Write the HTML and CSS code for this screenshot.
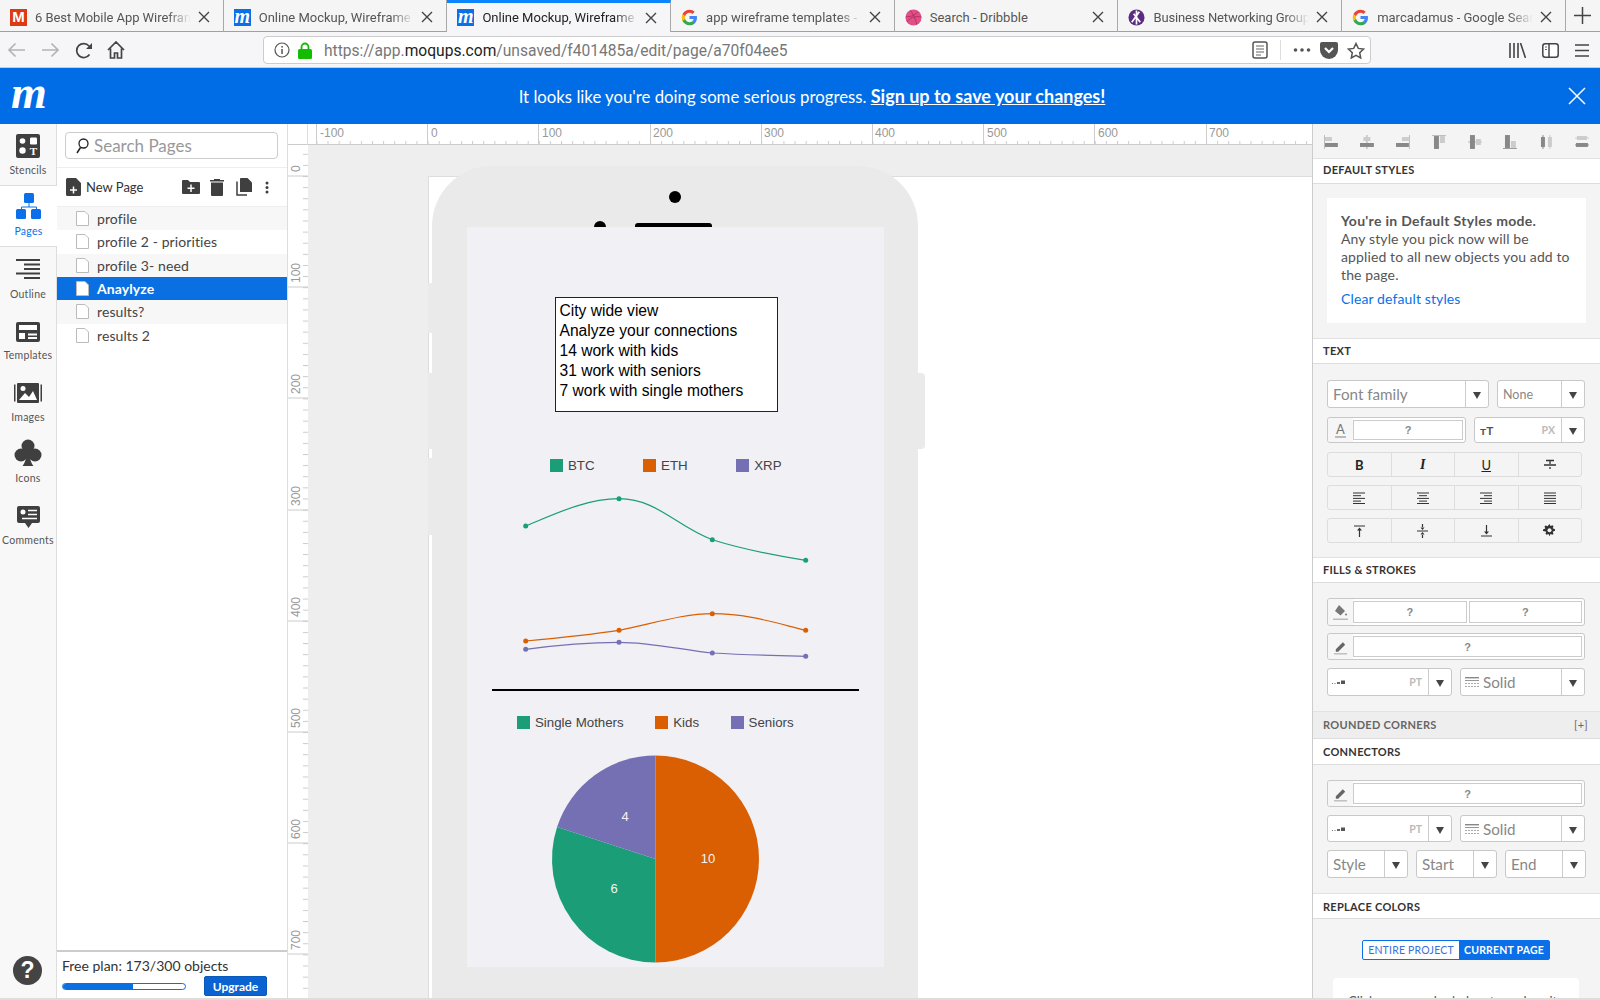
FILE: index.html
```html
<!DOCTYPE html>
<html lang="en">
<head>
<meta charset="UTF-8">
<title>Online Mockup, Wireframe</title>
<link rel="stylesheet" href="styles.css">
</head>
<body>

<svg class="sprite">
    <symbol id="g-logo" viewBox="0 0 24 24">
        <path fill="#4285F4" d="M22.56 12.25c0-.78-.07-1.53-.2-2.25H12v4.26h5.92c-.26 1.37-1.04 2.53-2.21 3.31v2.77h3.57c2.08-1.92 3.28-4.74 3.28-8.09z"/>
        <path fill="#34A853" d="M12 23c2.97 0 5.46-.98 7.28-2.66l-3.57-2.77c-.98.66-2.23 1.06-3.71 1.06-2.86 0-5.29-1.93-6.16-4.53H2.18v2.84C3.99 20.53 7.7 23 12 23z"/>
        <path fill="#FBBC05" d="M5.84 14.09c-.22-.66-.35-1.36-.35-2.09s.13-1.43.35-2.09V7.07H2.18C1.43 8.55 1 10.22 1 12s.43 3.45 1.18 4.93l2.85-2.22.81-.62z"/>
        <path fill="#EA4335" d="M12 5.38c1.62 0 3.06.56 4.21 1.64l3.15-3.15C17.45 2.09 14.97 1 12 1 7.7 1 3.99 3.47 2.18 7.07l3.66 2.84c.87-2.6 3.3-4.53 6.16-4.53z"/>
    </symbol>
    <symbol id="close-x" viewBox="0 0 12 12">
        <path d="M1 1l10 10M11 1L1 11" stroke="#444" stroke-width="1.4" fill="none"/>
    </symbol>
    <symbol id="page" viewBox="0 0 13 15">
        <path d="M.5.5h8.5l3.5 3.5v10.5H.5z" fill="#fff" stroke="#bbb"/>
    </symbol>
    <symbol id="pencil" viewBox="0 0 16 16">
        <path d="M3 10.5L10.5 3l2.5 2.5L5.5 13H3z" fill="#666"/>
        <rect x="1" y="14.5" width="14" height="1.5" fill="#bbb"/>
    </symbol>
    <symbol id="line-width" viewBox="0 0 14 6">
        <rect x="0" y="4" width="1" height="1" fill="#777"/>
        <rect x="2.5" y="4" width="1" height="1" fill="#777"/>
        <rect x="5" y="3" width="3" height="2" fill="#666"/>
        <rect x="9" y="1.5" width="4" height="3.5" fill="#555"/>
    </symbol>
    <symbol id="line-style" viewBox="0 0 14 12">
        <rect x="0" y="1" width="14" height="1.4" fill="#888"/>
        <rect x="0" y="4" width="14" height="1" fill="#999"/>
        <path d="M0 7.5h14M0 10.5h14" stroke="#aaa" stroke-dasharray="2 1"/>
    </symbol>
</svg>

<div class="tabs">
    <div class="tab">
        <span class="favicon fav-red">M</span>
        <span class="tab-title tab-title-snug">6 Best Mobile App Wirefran</span>
        <svg class="tab-close"><use href="#close-x"/></svg>
    </div>
    <div class="tab">
        <span class="favicon fav-blue">m</span>
        <span class="tab-title">Online Mockup, Wireframe</span>
        <svg class="tab-close"><use href="#close-x"/></svg>
    </div>
    <div class="tab tab-active">
        <span class="favicon fav-blue">m</span>
        <span class="tab-title">Online Mockup, Wireframe</span>
        <svg class="tab-close"><use href="#close-x"/></svg>
    </div>
    <div class="tab">
        <svg class="fav-svg"><use href="#g-logo"/></svg>
        <span class="tab-title">app wireframe templates -</span>
        <svg class="tab-close"><use href="#close-x"/></svg>
    </div>
    <div class="tab">
        <svg class="fav-svg" viewBox="0 0 18 18">
            <circle cx="9" cy="9" r="8.5" fill="#e04f86"/>
            <path d="M5.5 1.5c3 3.5 6 9.5 7 15M1 8c4 .5 9-.5 12.5-5M2.5 13.5c2.5-4 7-6.5 15-5" stroke="#a82a5c" stroke-width=".8" fill="none"/>
        </svg>
        <span class="tab-title tab-title-short">Search - Dribbble</span>
        <svg class="tab-close"><use href="#close-x"/></svg>
    </div>
    <div class="tab">
        <svg class="fav-svg" viewBox="0 0 18 18">
            <circle cx="9" cy="9" r="8.5" fill="#5b2d82"/>
            <path d="M9 1.5v15M4 14L12 3M6 5l7 9" stroke="#fff" stroke-width="1.8" fill="none"/>
        </svg>
        <span class="tab-title tab-title-tight">Business Networking Group</span>
        <svg class="tab-close"><use href="#close-x"/></svg>
    </div>
    <div class="tab">
        <svg class="fav-svg"><use href="#g-logo"/></svg>
        <span class="tab-title">marcadamus - Google Sear</span>
        <svg class="tab-close"><use href="#close-x"/></svg>
    </div>
    <div class="new-tab">
        <svg width="17" height="17" viewBox="0 0 17 17"><path d="M8.5 0v17M0 8.5h17" stroke="#444" stroke-width="1.5"/></svg>
    </div>
</div>

<div class="toolbar">
    <svg class="tool tool-back" width="19" height="16" viewBox="0 0 19 16"><path d="M18 8H2M8.5 1.5L2 8l6.5 6.5" stroke="#b4b4b4" stroke-width="1.7" fill="none"/></svg>
    <svg class="tool tool-forward" width="19" height="16" viewBox="0 0 19 16"><path d="M1 8h16M10.5 1.5L17 8l-6.5 6.5" stroke="#b4b4b4" stroke-width="1.7" fill="none"/></svg>
    <svg class="tool tool-reload" width="18" height="17" viewBox="0 0 18 17"><path d="M14.5 12.5A7 7 0 1 1 14 4l2 2" stroke="#444" stroke-width="1.7" fill="none"/><path d="M17 1v6h-6z" fill="#444"/></svg>
    <svg class="tool tool-home" width="18" height="18" viewBox="0 0 18 18"><path d="M1 9l8-8 8 8M3.5 7.5V17h4v-5h3v5h4V7.5" stroke="#444" stroke-width="1.7" fill="none"/></svg>

    <div class="urlbar">
        <svg class="url-info" width="16" height="16" viewBox="0 0 16 16"><circle cx="8" cy="8" r="7" fill="none" stroke="#555" stroke-width="1.2"/><rect x="7.3" y="7" width="1.5" height="5" fill="#555"/><rect x="7.3" y="4" width="1.5" height="1.6" fill="#555"/></svg>
        <svg class="url-lock" width="14" height="17" viewBox="0 0 14 17"><path d="M3.5 8V5a3.5 3.5 0 0 1 7 0v3" stroke="#12bc00" stroke-width="1.8" fill="none"/><rect y="7" width="14" height="10" rx="1.5" fill="#12bc00"/></svg>
        <span class="url-text">https://app.<b>moqups.com</b>/unsaved/f401485a/edit/page/a70f04ee5</span>
        <svg width="16" height="18" viewBox="0 0 16 18"><rect x="1" y="1" width="14" height="16" rx="2" fill="#fff" stroke="#555" stroke-width="1.5"/><path d="M4 5h8M4 8h8M4 11h8M4 14h5" stroke="#666"/></svg>
        <span class="url-sep"></span>
        <svg width="18" height="4" viewBox="0 0 18 4"><circle cx="2.5" cy="2" r="1.8" fill="#555"/><circle cx="9" cy="2" r="1.8" fill="#555"/><circle cx="15.5" cy="2" r="1.8" fill="#555"/></svg>
        <svg width="18" height="17" viewBox="0 0 18 17"><path d="M2 0h14a2 2 0 0 1 2 2v6a9 9 0 0 1-18 0V2a2 2 0 0 1 2-2z" fill="#555"/><path d="M5 6l4 4 4-4" stroke="#fff" stroke-width="2.2" fill="none"/></svg>
        <svg width="18" height="17" viewBox="0 0 18 17"><path d="M9 1.5l2.3 4.9 5.2.7-3.8 3.6 1 5.3L9 13.4 4.3 16l1-5.300L1.500 7.100l5.200-.7z" fill="none" stroke="#555" stroke-width="1.5"/></svg>
    </div>

    <div class="browser-right">
        <svg width="17" height="15" viewBox="0 0 17 15"><path d="M1 0v15M5 0v15M9 0v15M11.5 0l5 15" stroke="#444" stroke-width="1.6"/></svg>
        <svg width="17" height="15" viewBox="0 0 17 15"><rect x=".8" y=".8" width="15.4" height="13.4" rx="2.5" fill="#fff" stroke="#444" stroke-width="1.5"/><path d="M7 1v13" stroke="#444" stroke-width="1.5"/><path d="M3 4h2M3 6.5h2" stroke="#666"/></svg>
        <svg width="14" height="13" viewBox="0 0 14 13"><path d="M0 1h14M0 6.5h14M0 12h14" stroke="#444" stroke-width="1.6"/></svg>
    </div>
</div>

<div class="banner">
    <span class="logo">m</span>
    <p class="banner-text">It looks like you're doing some serious progress. <a href="#">Sign up to save your changes!</a></p>
    <svg class="banner-close" width="18" height="18" viewBox="0 0 18 18"><path d="M1 1l16 16M17 1L1 17" stroke="#fff" stroke-width="1.5"/></svg>
</div>

<div class="app">

    <div class="rail">
        <div class="rail-item">
            <svg width="24" height="24" viewBox="0 0 24 24">
                <rect width="24" height="24" rx="2" fill="#3f3f3f"/>
                <circle cx="6.5" cy="7" r="2.8" fill="#fff"/>
                <rect x="14" y="3.5" width="7" height="7" rx="1.2" fill="#fff"/>
                <circle cx="6.5" cy="16.5" r="3.2" fill="#fff"/>
                <text x="17.5" y="21" class="stencil-t">T</text>
            </svg>
            <span>Stencils</span>
        </div>
        <div class="rail-item rail-active">
            <svg width="26" height="26" viewBox="0 0 26 26">
                <rect x="8" y="0" width="10" height="10" rx="1.5" fill="#0a6fe8"/>
                <path d="M13 10v4M5.5 16v-2h15v2" stroke="#0a6fe8" fill="none"/>
                <rect x="0" y="16" width="10" height="10" rx="1.5" fill="#0a6fe8"/>
                <rect x="15" y="16" width="10" height="10" rx="1.5" fill="#0a6fe8"/>
            </svg>
            <span>Pages</span>
        </div>
        <div class="rail-item rail-up-3">
            <svg width="24" height="20" viewBox="0 0 24 20">
                <path d="M0 1h24M8 5.5h16M8 10h16M0 14.5h24M8 19h16" stroke="#3f3f3f" stroke-width="1.8"/>
            </svg>
            <span>Outline</span>
        </div>
        <div class="rail-item rail-up-1">
            <svg width="24" height="20" viewBox="0 0 24 20">
                <rect width="24" height="20" rx="2" fill="#3f3f3f"/>
                <rect x="3" y="3" width="18" height="5" fill="#fff"/>
                <rect x="3" y="11" width="6" height="6" fill="#fff"/>
                <path d="M12 12.5h9M12 16h9" stroke="#fff" stroke-width="1.8"/>
            </svg>
            <span>Templates</span>
        </div>
        <div class="rail-item rail-up-2">
            <svg width="28" height="20" viewBox="0 0 28 20">
                <rect x="0" y="1.5" width="1.5" height="17" fill="#3f3f3f"/>
                <rect x="26.5" y="1.5" width="1.5" height="17" fill="#3f3f3f"/>
                <rect x="3" y="0" width="22" height="20" rx="1" fill="#3f3f3f"/>
                <path d="M5 17l6-7 4 4 4-6 4 9z" fill="#fff"/>
                <circle cx="9" cy="5.5" r="2.5" fill="#fff"/>
            </svg>
            <span>Images</span>
        </div>
        <div class="rail-item rail-down-1">
            <svg width="28" height="28" viewBox="0 0 28 28">
                <circle cx="14" cy="7" r="6.5" fill="#3f3f3f"/>
                <circle cx="7" cy="16" r="6.5" fill="#3f3f3f"/>
                <circle cx="21" cy="16" r="6.5" fill="#3f3f3f"/>
                <path d="M12.5 12h3c0 7 1 11 4 15H8.5c3-4 4-8 4-15z" fill="#3f3f3f"/>
            </svg>
            <span>Icons</span>
        </div>
        <div class="rail-item">
            <svg width="23" height="22" viewBox="0 0 23 22">
                <path d="M2 0h19a2 2 0 0 1 2 2v13a2 2 0 0 1-2 2h-6l-3.5 5L8 17H2a2 2 0 0 1-2-2V2a2 2 0 0 1 2-2z" fill="#3f3f3f"/>
                <circle cx="6" cy="6" r="2.5" fill="#fff"/>
                <path d="M11 4.5h9M11 8.5h9M5 12.5h15" stroke="#fff" stroke-width="1.5"/>
            </svg>
            <span>Comments</span>
        </div>
        <div class="help">?</div>
    </div>

    <div class="pages">
        <div class="search-area">
            <div class="search-box">
                <svg width="13" height="16" viewBox="0 0 13 16"><circle cx="7.5" cy="5.5" r="4.5" fill="none" stroke="#222" stroke-width="1.3"/><path d="M4.5 9.5L1 15" stroke="#222" stroke-width="1.5"/></svg>
                <span>Search Pages</span>
            </div>
        </div>
        <div class="pages-tools">
            <svg class="new-page-icon" width="15" height="18" viewBox="0 0 15 18"><path d="M1.5 0H10l5 5v11.5a1.5 1.5 0 0 1-1.5 1.5h-12A1.5 1.5 0 0 1 0 16.500v-15A1.500 1.500 0 0 1 1.500 0z" fill="#3f3f3f"/><path d="M7.5 8.5v7M4 12h7" stroke="#fff" stroke-width="1.5"/></svg>
            <span class="new-page-text">New Page</span>
            <svg class="tool-folder" width="18" height="14" viewBox="0 0 18 14"><path d="M0 1a1 1 0 0 1 1-1h5l2 2h9a1 1 0 0 1 1 1v10a1 1 0 0 1-1 1H1a1 1 0 0 1-1-1z" fill="#3f3f3f"/><path d="M9 4.5v7.5M5.5 8.2h7" stroke="#fff" stroke-width="1.5"/></svg>
            <svg class="tool-trash" width="14" height="18" viewBox="0 0 14 18"><path d="M0 2h14v1.5H0z" fill="#3f3f3f"/><path d="M4 1h6v1H4z" fill="#3f3f3f"/><path d="M1 4.5h12V17a1 1 0 0 1-1 1H2a1 1 0 0 1-1-1z" fill="#3f3f3f"/></svg>
            <svg class="tool-copy" width="16" height="18" viewBox="0 0 16 18"><path d="M5 0h6.5L16 4.5V14H4V1a1 1 0 0 1 1-1z" fill="#3f3f3f"/><path d="M1 3.5V17h10" stroke="#3f3f3f" stroke-width="1.5" fill="none"/></svg>
            <svg class="tool-dots" width="4" height="13" viewBox="0 0 4 13"><circle cx="2" cy="2" r="1.5" fill="#3f3f3f"/><circle cx="2" cy="6.5" r="1.5" fill="#3f3f3f"/><circle cx="2" cy="11" r="1.5" fill="#3f3f3f"/></svg>
        </div>
        <div class="page-row"><svg class="page-icon"><use href="#page"/></svg>profile</div>
        <div class="page-row"><svg class="page-icon"><use href="#page"/></svg>profile 2 - priorities</div>
        <div class="page-row"><svg class="page-icon"><use href="#page"/></svg>profile 3- need</div>
        <div class="page-row page-selected"><svg class="page-icon"><use href="#page"/></svg>Anaylyze</div>
        <div class="page-row"><svg class="page-icon"><use href="#page"/></svg>results?</div>
        <div class="page-row"><svg class="page-icon"><use href="#page"/></svg>results 2</div>

        <div class="plan">
            <div class="plan-text">Free plan: 173/300 objects</div>
            <div class="plan-row">
                <div class="plan-bar"><div class="plan-fill"></div></div>
                <button class="upgrade">Upgrade</button>
            </div>
        </div>
    </div>

    <div class="workspace">
        <div class="ruler-corner"></div>
        <svg class="ruler-h" width="1004" height="21" viewBox="0 0 1004 21">
            <defs>
                <pattern id="ticks-h" patternUnits="userSpaceOnUse" x="8.4" y="0" width="11.12" height="21">
                    <rect x="0" y="17" width="1" height="4" fill="#ccc"/>
                </pattern>
            </defs>
            <rect width="1004" height="21" fill="url(#ticks-h)"/>
            <path d="M8.5 0v21M119.5 0v21M230.5 0v21M342.5 0v21M453.5 0v21M564.5 0v21M675.5 0v21M786.5 0v21M898.5 0v21M0 20.5h1004" stroke="#ccc"/>
            <g class="ruler-label">
                <text x="12" y="13">-100</text><text x="123" y="13">0</text><text x="234" y="13">100</text>
                <text x="345" y="13">200</text><text x="456" y="13">300</text><text x="567" y="13">400</text>
                <text x="679" y="13">500</text><text x="790" y="13">600</text><text x="901" y="13">700</text>
            </g>
        </svg>
        <svg class="ruler-v" width="20" height="853" viewBox="0 0 20 853">
            <defs>
                <pattern id="ticks-v" patternUnits="userSpaceOnUse" x="0" y="8.76" width="20" height="11.12">
                    <rect x="15" y="0" width="5" height="1" fill="#ccc"/>
                </pattern>
            </defs>
            <rect width="20" height="853" fill="url(#ticks-v)"/>
            <path d="M0 31h20M0 142h20M0 253h20M0 365h20M0 476h20M0 587h20M0 698h20M0 809h20" stroke="#ccc"/>
            <g class="ruler-label">
                <text transform="translate(12 27) rotate(-90)">0</text>
                <text transform="translate(12 138) rotate(-90)">100</text>
                <text transform="translate(12 249) rotate(-90)">200</text>
                <text transform="translate(12 361) rotate(-90)">300</text>
                <text transform="translate(12 472) rotate(-90)">400</text>
                <text transform="translate(12 583) rotate(-90)">500</text>
                <text transform="translate(12 694) rotate(-90)">600</text>
                <text transform="translate(12 805) rotate(-90)">700</text>
            </g>
        </svg>

        <div class="canvas">
            <div class="artboard"></div>
            <div class="phone">
                <span class="phone-btn btn-left-1"></span>
                <span class="phone-btn btn-left-2"></span>
                <span class="phone-btn btn-left-3"></span>
                <span class="phone-btn btn-right"></span>
                <span class="phone-camera"></span>
                <span class="phone-sensor"></span>
                <span class="phone-speaker"></span>
                <div class="screen">
                    <div class="note">City wide view<br>Analyze your connections<br>14 work with kids<br>31 work with seniors<br>7 work with single mothers</div>

                    <div class="legend legend-top">
                        <span class="legend-item"><i class="swatch sw-green"></i>BTC</span>
                        <span class="legend-item"><i class="swatch sw-orange"></i>ETH</span>
                        <span class="legend-item"><i class="swatch sw-purple"></i>XRP</span>
                    </div>

                    <svg class="chart" width="417" height="740" viewBox="0 0 417 740">
                        <g fill="none" stroke-width="1.2">
                            <path stroke="#1b9e77" d="M58.7 299C90 286 120 271.7 152 271.7C190 271.7 210 300 245.3 312.7C275 322 305 328 338.7 333.3"/>
                            <path stroke="#d95f02" d="M58.7 414C90 411 120 408 152 403.3C185 397 215 386.7 245.3 386.7C280 386.7 305 395 338.7 403.3"/>
                            <path stroke="#7570b3" d="M58.7 422.3C90 418 120 415.3 152 415.3C185 415.3 215 423 245.3 426C280 428 305 428.5 338.7 429.3"/>
                        </g>
                        <g fill="#1b9e77"><circle cx="58.7" cy="299" r="2.5"/><circle cx="152" cy="271.7" r="2.5"/><circle cx="245.3" cy="312.7" r="2.5"/><circle cx="338.7" cy="333.3" r="2.5"/></g>
                        <g fill="#d95f02"><circle cx="58.7" cy="414" r="2.5"/><circle cx="152" cy="403.3" r="2.5"/><circle cx="245.3" cy="386.7" r="2.5"/><circle cx="338.7" cy="403.3" r="2.5"/></g>
                        <g fill="#7570b3"><circle cx="58.7" cy="422.3" r="2.5"/><circle cx="152" cy="415.3" r="2.5"/><circle cx="245.3" cy="426" r="2.5"/><circle cx="338.7" cy="429.3" r="2.5"/></g>
                        <rect x="25" y="462" width="367" height="2" fill="#000"/>

                        <path fill="#d95f02" d="M188.5 632V528.5A103.5 103.5 0 0 1 188.5 735.5z"/>
                        <path fill="#1b9e77" d="M188.5 632V735.5A103.5 103.5 0 0 1 90.06 600z"/>
                        <path fill="#7570b3" d="M188.5 632L90.06 600A103.5 103.5 0 0 1 188.5 528.5z"/>
                        <g class="pie-label">
                            <text x="241" y="636">10</text>
                            <text x="147" y="666">6</text>
                            <text x="158" y="594">4</text>
                        </g>
                    </svg>

                    <div class="legend legend-bottom">
                        <span class="legend-item"><i class="swatch sw-green"></i>Single Mothers</span>
                        <span class="legend-item"><i class="swatch sw-orange"></i>Kids</span>
                        <span class="legend-item"><i class="swatch sw-purple"></i>Seniors</span>
                    </div>
                </div>
            </div>
        </div>
    </div>

    <div class="props">
        <div class="align-row">
            <svg viewBox="0 0 16 16"><rect x="1" y="1" width="1" height="14" fill="#bbb"/><rect x="2" y="9" width="13" height="4" fill="#888"/><rect x="2" y="3" width="7" height="4" fill="#ccc"/></svg>
            <svg viewBox="0 0 16 16"><rect x="7.5" y="1" width="1" height="14" fill="#aaa"/><rect x="1" y="9" width="14" height="4" fill="#888"/><rect x="4.5" y="3" width="7" height="4" fill="#ccc"/></svg>
            <svg viewBox="0 0 16 16"><rect x="14" y="1" width="1" height="14" fill="#bbb"/><rect x="1" y="9" width="13" height="4" fill="#888"/><rect x="7" y="3" width="7" height="4" fill="#ccc"/></svg>
            <svg viewBox="0 0 16 16"><rect x="1" y="1" width="14" height="1" fill="#bbb"/><rect x="3" y="2" width="5" height="13" fill="#888"/><rect x="9" y="2" width="5" height="7" fill="#ccc"/></svg>
            <svg viewBox="0 0 16 16"><rect x="1" y="7.5" width="14" height="1" fill="#bbb"/><rect x="3" y="1" width="5" height="14" fill="#888"/><rect x="9" y="5" width="5" height="6" fill="#ccc"/></svg>
            <svg viewBox="0 0 16 16"><rect x="1" y="14" width="14" height="1" fill="#999"/><rect x="3" y="1" width="5" height="13" fill="#888"/><rect x="9" y="7" width="5" height="7" fill="#ccc"/></svg>
            <svg viewBox="0 0 16 16"><rect x="3" y="3" width="4" height="10" fill="#888"/><rect x="4.5" y="1" width="1" height="14" fill="#888"/><rect x="10" y="3" width="4" height="10" fill="#ccc"/><rect x="11.5" y="1" width="1" height="14" fill="#ccc"/></svg>
            <svg viewBox="0 0 16 16"><rect x="3" y="2" width="10" height="4" fill="#ccc"/><rect x="1" y="3.5" width="14" height="1" fill="#ccc"/><rect x="2" y="9" width="12" height="4" fill="#888"/><rect x="1" y="10.5" width="14" height="1" fill="#888"/></svg>
        </div>

        <div class="sec-head sec-first">Default styles</div>
        <div class="sec-body body-default">
            <div class="info-card">
                <b>You're in Default Styles mode.</b><br>
                Any style you pick now will be<br>
                applied to all new objects you add to<br>
                the page.
                <a href="#">Clear default styles</a>
            </div>
        </div>

        <div class="sec-head">Text</div>
        <div class="sec-body body-text">
            <div class="row">
                <div class="ctl w-162 h-28"><span class="ctl-text">Font family</span><span class="arrow"></span></div>
                <div class="ctl w-88 h-28"><span class="ctl-text small">None</span><span class="arrow"></span></div>
            </div>
            <div class="row mt-9">
                <div class="ctl w-139 h-26">
                    <span class="swatch-slot"><span class="letter-a">A</span></span>
                    <span class="color-box">?</span>
                </div>
                <div class="ctl w-111 h-26">
                    <span class="size-icon">тT</span><span class="unit">PX</span><span class="arrow"></span>
                </div>
            </div>
            <div class="btn-group mt-9">
                <span><b class="fmt-b">B</b></span>
                <span><i class="fmt-i">I</i></span>
                <span><u class="fmt-u">U</u></span>
                <span><svg width="12" height="12" viewBox="0 0 12 12"><path d="M0 6h12M2 1.5h8M6 1.5V5M6 8v2" stroke="#333" stroke-width="1.3"/></svg></span>
            </div>
            <div class="btn-group mt-8">
                <span><svg width="12" height="12" viewBox="0 0 12 12"><path d="M0 1h12M0 3.7h8M0 6.4h12M0 9.1h8M0 11.5h12" stroke="#333"/></svg></span>
                <span><svg width="12" height="12" viewBox="0 0 12 12"><path d="M0 1h12M2 3.7h8M0 6.4h12M2 9.1h8M0 11.5h12" stroke="#333"/></svg></span>
                <span><svg width="12" height="12" viewBox="0 0 12 12"><path d="M0 1h12M4 3.7h8M0 6.4h12M4 9.1h8M0 11.5h12" stroke="#333"/></svg></span>
                <span><svg width="12" height="12" viewBox="0 0 12 12"><path d="M0 1h12M0 3.7h12M0 6.4h12M0 9.1h12M0 11.5h12" stroke="#333"/></svg></span>
            </div>
            <div class="btn-group mt-8">
                <span><svg width="11" height="12" viewBox="0 0 11 12"><path d="M0 1h11M5.5 12V4" stroke="#333" stroke-width="1.2"/><path d="M5.5 2.5L3 5.5h5z" fill="#333"/></svg></span>
                <span><svg width="11" height="14" viewBox="0 0 11 14"><path d="M0 7h11M5.5 0v3M5.5 11v3" stroke="#333" stroke-width="1.2"/><path d="M5.5 6L3.5 3.5h4zM5.5 8l-2 2.5h4z" fill="#333"/></svg></span>
                <span><svg width="11" height="12" viewBox="0 0 11 12"><path d="M0 11h11M5.5 0v8" stroke="#333" stroke-width="1.2"/><path d="M5.5 9.5L3 6.5h5z" fill="#333"/></svg></span>
                <span><svg width="13" height="13" viewBox="0 0 13 13"><path d="M6.5 0l1 2 2-.8 1 1-.8 2 2.3 1v1.6l-2.3 1 .8 2-1 1-2-.8-1 2.3-1-2.3-2 .8-1-1 .8-2L0 7V5.4l2.3-1-.8-2 1-1 2 .8z" fill="#333"/><circle cx="6.5" cy="6.3" r="2" fill="#f4f4f4"/></svg></span>
            </div>
        </div>

        <div class="sec-head">Fills &amp; strokes</div>
        <div class="sec-body body-fills">
            <div class="ctl w-258 h-28">
                <span class="swatch-slot">
                    <svg width="15" height="16" viewBox="0 0 15 16"><path d="M6 1l6 6-4.5 4.5L2 7z" fill="#777"/><circle cx="13" cy="10.5" r="1" fill="#777"/><rect x="0" y="14.5" width="15" height="1.5" fill="#bbb"/></svg>
                </span>
                <span class="color-box">?</span><span class="color-box">?</span>
            </div>
            <div class="ctl w-258 h-27 mt-7">
                <span class="swatch-slot"><svg width="15" height="16"><use href="#pencil"/></svg></span>
                <span class="color-box">?</span>
            </div>
            <div class="row mt-8">
                <div class="ctl w-125 h-28">
                    <svg class="lw-icon" width="14" height="6"><use href="#line-width"/></svg>
                    <span class="unit">PT</span><span class="arrow"></span>
                </div>
                <div class="ctl w-125 h-28">
                    <svg class="ls-icon" width="14" height="12"><use href="#line-style"/></svg>
                    <span class="ctl-text solid">Solid</span><span class="arrow"></span>
                </div>
            </div>
        </div>

        <div class="sec-head sec-collapsed">Rounded corners<span>[+]</span></div>

        <div class="sec-head sec-connectors">Connectors</div>
        <div class="sec-body body-connectors">
            <div class="ctl w-258 h-27">
                <span class="swatch-slot"><svg width="15" height="16"><use href="#pencil"/></svg></span>
                <span class="color-box">?</span>
            </div>
            <div class="row mt-8">
                <div class="ctl w-125 h-27">
                    <svg class="lw-icon" width="14" height="6"><use href="#line-width"/></svg>
                    <span class="unit">PT</span><span class="arrow"></span>
                </div>
                <div class="ctl w-125 h-27">
                    <svg class="ls-icon" width="14" height="12"><use href="#line-style"/></svg>
                    <span class="ctl-text solid">Solid</span><span class="arrow"></span>
                </div>
            </div>
            <div class="row mt-8">
                <div class="ctl w-81 h-28"><span class="ctl-text">Style</span><span class="arrow"></span></div>
                <div class="ctl w-81 h-28"><span class="ctl-text">Start</span><span class="arrow"></span></div>
                <div class="ctl w-81 h-28"><span class="ctl-text">End</span><span class="arrow"></span></div>
            </div>
        </div>

        <div class="sec-head sec-replace">Replace colors</div>
        <div class="sec-body body-replace">
            <div class="segment"><span>Entire project</span><span class="segment-on">Current page</span></div>
            <div class="replace-card">Click on any color below to replace it</div>
        </div>
    </div>

</div>

</body>
</html>
```

FILE: styles.css
```css
body {
    margin: 0;
    height: 1000px;
    overflow: hidden;
    display: flex;
    flex-direction: column;
    font-family: Lato, Arial, sans-serif;
    color: #444;
    background-color: #fff;
}

.sprite {
    display: none;
}

/* Browser tabs */
.tabs {
    display: flex;
    height: 32px;
    flex-shrink: 0;
    box-sizing: border-box;
    background-color: #f5f5f5;
    border-bottom: 1px solid #a0a0a0;
}

.tab {
    width: 223.7px;
    box-sizing: border-box;
    height: 32px;
    display: flex;
    align-items: center;
    padding: 2px 13px 0 10px;
    border-right: 1px solid #a8a8a8;
    font-family: Roboto, Arial, sans-serif;
    font-size: 13px;
    color: #555;
}

.tab-active {
    background-color: #f6f6f8;
    border-top: 3px solid #0a84ff;
    padding-top: 0;
    color: #222;
}

.favicon {
    width: 17px;
    height: 17px;
    flex-shrink: 0;
    color: #fff;
    text-align: center;
    line-height: 16px;
}

.fav-red {
    background-color: #dd3a14;
    font-family: "Liberation Sans", Arial, sans-serif;
    font-weight: bold;
    font-size: 15px;
}

.fav-blue {
    background-color: #0b6fe8;
    font-family: "Liberation Serif", serif;
    font-weight: bold;
    font-style: italic;
    font-size: 20px;
    line-height: 14px;
}

.fav-svg {
    width: 17px;
    height: 17px;
    flex-shrink: 0;
}

.tab-title {
    flex: 1;
    margin-left: 8px;
    white-space: nowrap;
    overflow: hidden;
    -webkit-mask-image: linear-gradient(to right, #000 85%, transparent 100%);
    mask-image: linear-gradient(to right, #000 85%, transparent 100%);
}

.tab-title-short {
    -webkit-mask-image: none;
    mask-image: none;
}

.tab-title-snug {
    letter-spacing: -.05px;
}

.tab-title-tight {
    letter-spacing: -.15px;
}

.tab-close {
    width: 12px;
    height: 12px;
    margin-left: 7px;
    flex-shrink: 0;
}

.new-tab {
    flex: 1;
    display: flex;
    align-items: center;
    justify-content: center;
}

/* Browser toolbar */
.toolbar {
    display: flex;
    align-items: center;
    height: 36px;
    flex-shrink: 0;
    box-sizing: border-box;
    padding-top: 1px;
    background-color: #f6f6f8;
    border-bottom: 1px solid #ccc;
}

.tool {
    flex-shrink: 0;
}

.tool-back {
    margin-left: 7px;
}

.tool-forward {
    margin-left: 15px;
}

.tool-reload {
    margin-left: 15px;
}

.tool-home {
    margin-left: 14px;
}

.urlbar {
    width: 1108px;
    height: 28px;
    margin-left: 138px;
    box-sizing: border-box;
    display: flex;
    align-items: center;
    gap: 9px;
    padding: 0 5px 0 10px;
    background-color: #fff;
    border: 1px solid #ccc;
    border-radius: 4px;
    font-family: Roboto, Arial, sans-serif;
}

.url-info {
    flex-shrink: 0;
}

.url-lock {
    margin-left: -1px;
}

.url-text {
    flex: 1;
    margin: 2px 0 0 3px;
    font-size: 15.6px;
    color: #777;
    white-space: nowrap;
}

.url-text b {
    font-weight: normal;
    color: #222;
}

.url-sep {
    width: 1px;
    height: 20px;
    margin: 0 3px;
    background-color: #ddd;
}

.browser-right {
    display: flex;
    align-items: center;
    gap: 16px;
    margin-left: 138px;
}

/* Blue notice */
.banner {
    display: flex;
    align-items: center;
    height: 56px;
    flex-shrink: 0;
    background-color: #006de6;
    color: #fff;
}

.logo {
    width: 43px;
    padding-left: 11px;
    box-sizing: border-box;
    font-family: "Liberation Serif", serif;
    font-weight: bold;
    font-style: italic;
    font-size: 46px;
    line-height: 46px;
    margin-top: -6px;
}

.banner-text {
    flex: 1;
    margin: 0;
    padding-left: 41px;
    text-align: center;
    font-size: 16.75px;
}

.banner-text a {
    color: #fff;
    font-size: 18px;
    font-weight: bold;
}

.banner-close {
    margin: 0 14px 0 28px;
}

/* Main area */
.app {
    flex: 1;
    min-height: 0;
    display: flex;
    border-bottom: 2px solid #ddd;
}

/* Left rail */
.rail {
    width: 56px;
    flex-shrink: 0;
    display: flex;
    flex-direction: column;
    background-color: #f8f8f8;
    border-right: 1px solid #ddd;
}

.rail-item {
    height: 61.5px;
    flex-shrink: 0;
    box-sizing: border-box;
    display: flex;
    flex-direction: column;
    align-items: center;
    justify-content: flex-end;
    padding-bottom: 8px;
    font-size: 10.5px;
    letter-spacing: .25px;
    color: #555;
}

.rail-item span {
    margin-top: 6px;
    line-height: 13px;
}

.rail-item.rail-up-1 span {
    margin-top: 7px;
}

.rail-item.rail-up-2 span {
    margin-top: 8px;
}

.rail-item.rail-up-3 span {
    margin-top: 9px;
}

.rail-item.rail-down-1 span {
    margin-top: 5px;
}

.rail-item:first-child {
    border-bottom: 1px solid #ddd;
}

.rail-active {
    background-color: #fff;
    color: #0a6fe8;
    width: 57px;
    border-bottom: 1px solid #ddd;
}

.stencil-t {
    font-family: "Liberation Serif", serif;
    font-size: 11px;
    font-weight: bold;
    fill: #fff;
    text-anchor: middle;
}

.help {
    width: 29px;
    height: 29px;
    margin: auto 0 13px 13px;
    border-radius: 50%;
    background-color: #444;
    color: #fff;
    text-align: center;
    font-family: "Liberation Sans", Arial, sans-serif;
    font-size: 23px;
    font-weight: bold;
    line-height: 29px;
}

/* Pages panel */
.pages {
    width: 231px;
    flex-shrink: 0;
    box-sizing: border-box;
    display: flex;
    flex-direction: column;
    border-right: 1px solid #ddd;
}

.search-area {
    height: 44px;
    box-sizing: border-box;
    padding: 8px 9px 0 8px;
    border-bottom: 1px solid #eee;
}

.search-box {
    height: 27px;
    box-sizing: border-box;
    display: flex;
    align-items: center;
    gap: 5px;
    padding-left: 10px;
    border: 1px solid #ccc;
    border-radius: 4px;
    font-size: 17px;
    color: #999;
}

.pages-tools {
    height: 39px;
    display: flex;
    align-items: center;
    flex-shrink: 0;
    box-sizing: border-box;
    padding-left: 9px;
    border-bottom: 1px solid #eee;
}

.new-page-text {
    width: 96px;
    margin-left: 5px;
    font-size: 13px;
    color: #333;
}

.tool-trash {
    margin-left: 10px;
}

.tool-copy {
    margin-left: 12px;
}

.tool-dots {
    margin-left: 13px;
}

.page-row {
    height: 23.33px;
    flex-shrink: 0;
    display: flex;
    align-items: center;
    padding-left: 19px;
    font-size: 14px;
    letter-spacing: .1px;
    color: #444;
}

.pages-tools ~ .page-row:nth-child(odd) {
    background-color: #f7f7f7;
}

.pages-tools ~ .page-selected:nth-child(n) {
    background-color: #0a6fe0;
    color: #fff;
    font-weight: bold;
}

.page-icon {
    width: 13px;
    height: 15px;
    margin-right: 8px;
}

.plan {
    margin-top: auto;
    height: 48px;
    flex-shrink: 0;
    box-sizing: border-box;
    padding: 5px 5px 0;
    border-top: 2px solid #ccc;
}

.plan-text {
    font-size: 14px;
    line-height: 18px;
    color: #333;
}

.plan-row {
    display: flex;
    align-items: center;
    margin-top: 1px;
}

.plan-bar {
    width: 124px;
    height: 7px;
    box-sizing: border-box;
    margin-right: 18px;
    background-color: #fff;
    border: 1px solid #0a6fe0;
    border-radius: 4px;
    overflow: hidden;
}

.plan-fill {
    width: 57%;
    height: 100%;
    background-color: #0a6fe0;
}

.upgrade {
    width: 63px;
    height: 20px;
    padding: 0;
    background-color: #0a63d0;
    border: 1px solid #0a58b8;
    border-radius: 2px;
    color: #fff;
    font-family: Lato, Arial, sans-serif;
    font-size: 12px;
    font-weight: bold;
}

/* Rulers and canvas */
.workspace {
    flex: 1;
    min-width: 0;
    display: grid;
    grid-template-columns: 20px 1fr;
    grid-template-rows: 21px 1fr;
}

.ruler-corner {
    background-color: #fff;
    border-right: 1px solid #ddd;
    border-bottom: 1px solid #ccc;
    box-sizing: border-box;
}

.ruler-h {
    display: block;
    background-color: #fff;
}

.ruler-v {
    display: block;
    background-color: #fff;
}

.ruler-label {
    font-family: "Liberation Sans", Arial, sans-serif;
    font-size: 12px;
    fill: #999;
}

.canvas {
    position: relative;
    overflow: hidden;
    background-color: #eee;
}

.artboard {
    position: absolute;
    left: 120px;
    top: 31px;
    right: 0;
    bottom: 0;
    background-color: #fff;
    border-top: 1px solid #ddd;
    border-left: 1px solid #ddd;
}

.phone {
    position: absolute;
    left: 124px;
    top: 21px;
    width: 486px;
    height: 900px;
    background-color: #eaeaea;
    border-radius: 60px 60px 0 0;
}

.phone-btn {
    position: absolute;
    background-color: #eaeaea;
}

.btn-left-1 {
    left: -4px;
    top: 117px;
    width: 4px;
    height: 50px;
}

.btn-left-2 {
    left: -4px;
    top: 207px;
    width: 4px;
    height: 76px;
}

.btn-left-3 {
    left: -4px;
    top: 292px;
    width: 4px;
    height: 77px;
}

.btn-right {
    left: 486px;
    top: 207px;
    width: 7px;
    height: 76px;
    border-radius: 0 4px 4px 0;
}

.phone-camera {
    position: absolute;
    left: 237px;
    top: 25px;
    width: 12px;
    height: 12px;
    border-radius: 50%;
    background-color: #000;
}

.phone-sensor {
    position: absolute;
    left: 162px;
    top: 55px;
    width: 12px;
    height: 12px;
    border-radius: 50%;
    background-color: #000;
}

.phone-speaker {
    position: absolute;
    left: 203px;
    top: 57px;
    width: 77px;
    height: 8px;
    border-radius: 3px 3px 0 0;
    background-color: #000;
}

.screen {
    position: absolute;
    left: 35px;
    top: 61px;
    width: 417px;
    height: 740px;
    background-color: #f0f0f5;
    font-family: "Liberation Sans", Arial, sans-serif;
}

.note {
    position: absolute;
    left: 88px;
    top: 70px;
    width: 223px;
    height: 115px;
    box-sizing: border-box;
    padding: 3.4px 4px 0 3.5px;
    background-color: #fff;
    border: 1px solid #222;
    font-size: 15.6px;
    line-height: 20px;
    color: #000;
}

.legend {
    position: absolute;
    display: flex;
    font-size: 13.3px;
    color: #444;
}

.legend-top {
    left: 83px;
    top: 232px;
    gap: 48.5px;
}

.legend-bottom {
    left: 50px;
    top: 489px;
    gap: 31.5px;
}

.legend-item {
    display: flex;
    align-items: center;
    line-height: 13px;
}

.swatch {
    width: 13px;
    height: 13px;
    margin-right: 5px;
}

.sw-green {
    background-color: #1b9e77;
}

.sw-orange {
    background-color: #d95f02;
}

.sw-purple {
    background-color: #7570b3;
}

.chart {
    position: absolute;
    left: 0;
    top: 0;
}

.pie-label {
    font-size: 13px;
    fill: #f4f4f4;
    text-anchor: middle;
}

/* Right panel */
.props {
    width: 288px;
    flex-shrink: 0;
    box-sizing: border-box;
    overflow: hidden;
    background-color: #f4f4f4;
    border-left: 1px solid #ccc;
}

.align-row {
    height: 34px;
    box-sizing: border-box;
    padding-top: 2px;
    display: flex;
    align-items: center;
}

.align-row svg {
    width: 16px;
    height: 16px;
    padding: 0 10px;
}

.sec-head {
    height: 26px;
    box-sizing: border-box;
    padding: 0 10px 2px;
    display: flex;
    align-items: center;
    justify-content: space-between;
    background-color: #fff;
    border-top: 1px solid #e2e2e2;
    border-bottom: 1px solid #ddd;
    font-size: 11px;
    font-weight: bold;
    text-transform: uppercase;
    letter-spacing: .3px;
    color: #333;
}

.sec-first {
    padding-bottom: 4px;
}

.sec-collapsed {
    height: 28px;
    background-color: #eee;
    color: #666;
}

.sec-collapsed span {
    font-weight: normal;
    margin-right: 2px;
}

.sec-connectors {
    border-top: 0;
    padding-bottom: 0;
}

.sec-replace {
    padding-bottom: 0;
}

.sec-body {
    box-sizing: border-box;
    padding: 15px 14px 0;
}

.body-default {
    height: 154px;
    padding-top: 14px;
}

.body-text {
    height: 193px;
    padding-top: 16px;
}

.body-fills {
    height: 128px;
}

.body-connectors {
    height: 128px;
}

.info-card {
    width: 259px;
    height: 125px;
    box-sizing: border-box;
    padding: 14px 14px 0;
    background-color: #fff;
    font-size: 14px;
    letter-spacing: .12px;
    line-height: 18px;
    color: #555;
}

.info-card b {
    letter-spacing: .3px;
}

.info-card a {
    display: block;
    margin-top: 6px;
    color: #0a6fe8;
    text-decoration: none;
}

.row {
    display: flex;
    gap: 8px;
}

.mt-7 {
    margin-top: 7px;
}

.mt-8 {
    margin-top: 8px;
}

.mt-9 {
    margin-top: 9px;
}

.w-81 {
    width: 81px;
}

.w-88 {
    width: 88px;
}

.w-111 {
    width: 111px;
}

.w-125 {
    width: 125px;
}

.w-139 {
    width: 139px;
}

.w-162 {
    width: 162px;
}

.w-258 {
    width: 258px;
}

.h-26 {
    height: 26px;
}

.h-27 {
    height: 27px;
}

.h-28 {
    height: 28px;
}

.ctl {
    box-sizing: border-box;
    display: flex;
    align-items: center;
    background-color: #fff;
    border: 1px solid #c8c8c8;
    border-radius: 3px;
    color: #888;
}

.ctl-text {
    flex: 1;
    padding-left: 5px;
    font-size: 15.2px;
}

.ctl-text.small {
    font-size: 12.5px;
}

.ctl-text.solid {
    padding-left: 4px;
}

.arrow {
    width: 22px;
    height: 100%;
    flex-shrink: 0;
    display: flex;
    align-items: center;
    justify-content: center;
    border-left: 1px solid #ccc;
}

.arrow::after {
    content: "";
    margin-top: 3px;
    border-left: 4px solid transparent;
    border-right: 4px solid transparent;
    border-top: 7px solid #444;
}

.swatch-slot {
    width: 25px;
    height: 100%;
    flex-shrink: 0;
    display: flex;
    align-items: center;
    justify-content: center;
    background-color: #f6f6f6;
    border-radius: 3px 0 0 3px;
}

.letter-a {
    font-size: 13px;
    line-height: 13px;
    padding: 0 1px;
    color: #777;
    border-bottom: 2px solid #bbb;
}

.color-box {
    flex: 1;
    align-self: stretch;
    margin: 2px 2px 2px 0;
    display: flex;
    align-items: center;
    justify-content: center;
    background-color: #fff;
    border: 1px solid #ccc;
    font-family: "Liberation Sans", Arial, sans-serif;
    font-size: 11px;
    font-weight: bold;
    color: #888;
}

.size-icon {
    margin-left: 5px;
    font-size: 12px;
    font-weight: bold;
    color: #555;
}

.unit {
    flex: 1;
    padding-right: 6px;
    text-align: right;
    font-size: 10.5px;
    font-weight: bold;
    color: #bbb;
}

.lw-icon {
    margin-left: 4px;
}

.ls-icon {
    margin-left: 4px;
}

.btn-group {
    width: 255px;
    height: 25px;
    box-sizing: border-box;
    display: flex;
    background-color: #f4f4f4;
    border: 1px solid #ddd;
    border-radius: 3px;
}

.btn-group span {
    flex: 1;
    display: flex;
    align-items: center;
    justify-content: center;
    border-right: 1px solid #ddd;
}

.btn-group span:last-child {
    border-right: 0;
}

.fmt-b {
    font-size: 13px;
    color: #222;
}

.fmt-i {
    font-family: "Liberation Serif", serif;
    font-size: 14px;
    font-weight: bold;
    color: #222;
}

.fmt-u {
    font-size: 13px;
    color: #222;
}

.body-replace {
    padding-top: 21px;
}

.segment {
    width: 188px;
    height: 20px;
    box-sizing: border-box;
    margin-left: 35px;
    display: flex;
    border: 1px solid #0a6fe8;
    border-radius: 2px;
    background-color: #fff;
    font-size: 10.5px;
    text-transform: uppercase;
    letter-spacing: .2px;
    color: #3a70d8;
}

.segment span {
    flex: 1;
    display: flex;
    align-items: center;
    justify-content: center;
}

.segment .segment-on {
    flex: none;
    width: 90px;
    background-color: #0a6fe8;
    color: #fff;
    font-weight: bold;
}

.replace-card {
    width: 246px;
    height: 60px;
    box-sizing: border-box;
    margin: 18px 0 0 6px;
    padding: 15px;
    background-color: #fff;
    border-radius: 4px;
    font-size: 13px;
    color: #555;
}
```
